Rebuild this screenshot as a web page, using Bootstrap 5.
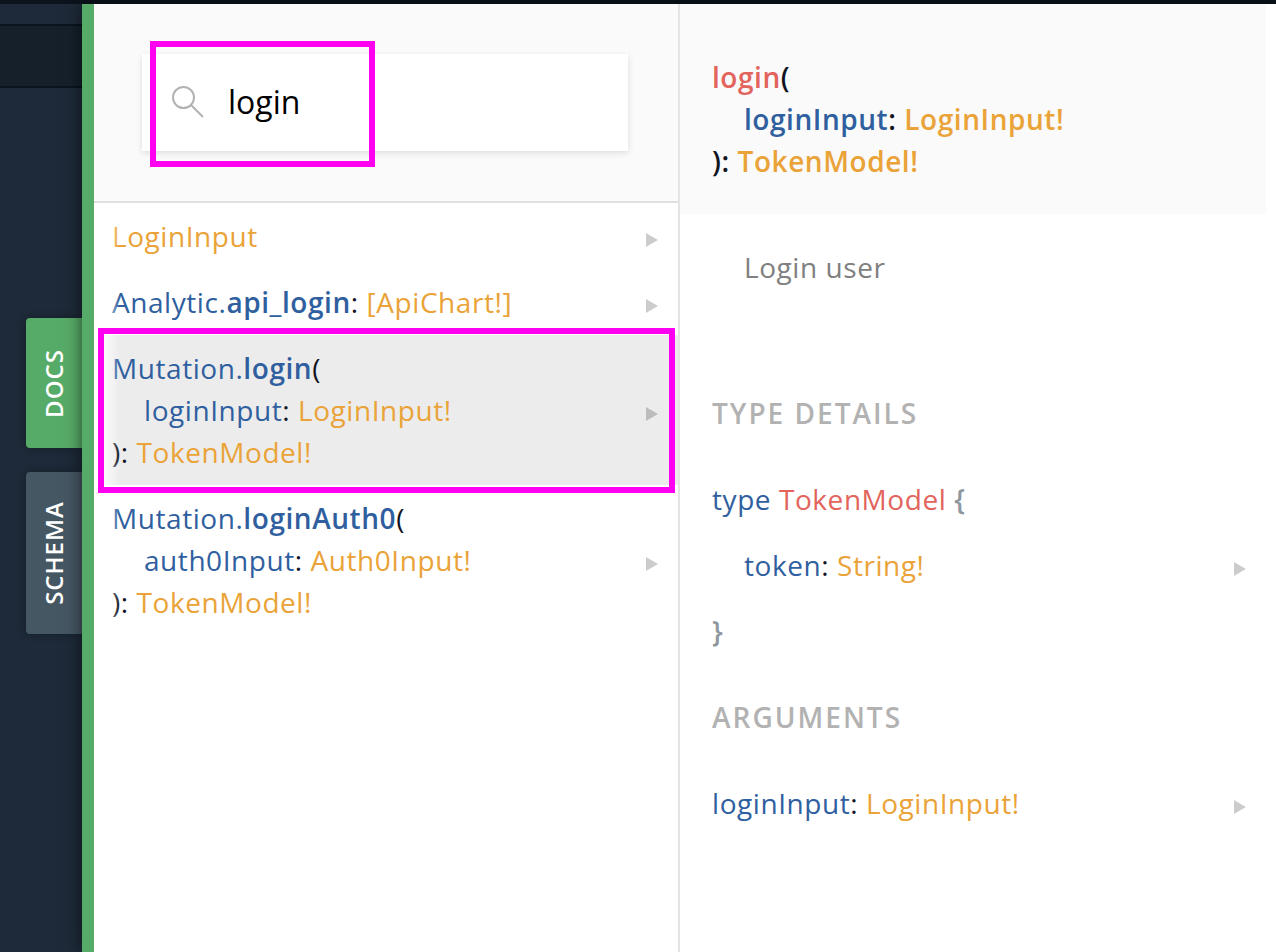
<!DOCTYPE html>
<html lang="en">
<head>
<meta charset="utf-8">
<meta name="viewport" content="width=device-width, initial-scale=1">
<title>API Docs</title>
<link href="https://cdn.jsdelivr.net/npm/bootstrap@5.3.0/dist/css/bootstrap.min.css" rel="stylesheet">
<style>
  body { background: #1e2a39; font-family: "Open Sans", sans-serif; font-size: 28px; line-height: 42px; letter-spacing: .02em; color: #11141f; }
  a { color: inherit; text-decoration: none; }
  .top-strip { height: 4px; background: #0b131c; }
  .editor-rail { width: 82px; }
  .editor-tabs { height: 20px; }
  .editor-bar { height: 64px; background: #15202a; border: solid #0b131c; border-width: 2px 0; }
  .side-tabs { margin-top: 230px; gap: 24px; }
  .side-tab { width: 56px; border: 0; border-radius: 4px 0 0 4px; padding: 0; color: #fff; background: #455763; font-size: 24px; font-weight: 600; line-height: 36px; letter-spacing: 1px; box-shadow: 0 0 8px rgba(0, 0, 0, .3); }
  .side-tab span { writing-mode: vertical-rl; transform: rotate(180deg); }
  .tab-docs { height: 130px; background: #57ab68; }
  .tab-schema { height: 162px; }
  .docs-panel { border-left: 12px solid #57ab68; padding-right: 10px; background: #fff; box-shadow: 0 0 16px rgba(0, 0, 0, .6); min-width: 0; }
  .results { border-right: 2px solid #e4e4e4; }
  .results::before { content: ""; position: absolute; z-index: 1; left: 0; top: 200px; bottom: 0; width: 26px; background: linear-gradient(to right, #fff 20%, rgba(255, 255, 255, 0)); }
  .search-head { padding: 50px 50px 50px 48px; background: #fafafa; border-bottom: 2px solid #e0e0e0; }
  .search-box { height: 97px; padding: 0 30px 2px; gap: 24px; background: #fff; box-shadow: 0 2px 6px rgba(0, 0, 0, .12); }
  .search-box input { min-width: 0; height: 56px; border: 0; padding: 0; outline: 0; background: none; color: #000; font-size: 32px; line-height: 48px; }
  .doc-row { padding: 12px 20px 12px 18px; }
  .doc-row.selected { background: #ececec; }
  .doc-row::after { content: ""; margin-top: 8px; border-left: 12px solid rgba(0, 0, 0, .2); border-top: 7px solid transparent; border-bottom: 7px solid transparent; }
  .doc-row.plain::after { content: none; }
  .details .doc-row { padding-left: 32px; }
  .details .doc-row.nested { padding-left: 64px; }
  .arg { padding-left: 32px; }
  .signature { padding: 52px 32px 32px; background: #fafafa; font-weight: 600; }
  .summary { padding: 32px 64px 104px; color: gray; }
  .section-title { margin: 0; padding: 32px; font-size: 28px; line-height: 42px; font-weight: 600; letter-spacing: 2px; color: #b2b2b2; }
  .summary + .section-title { padding-top: 0; }
  .field-name { color: #305f9f; }
  .field-name b, .brace { font-weight: 600; }
  .type-name { color: #eaa338; }
  .own-name { color: #e2645c; }
  .brace { color: #8e969e; }
  .highlight-frame { position: absolute; z-index: 2; border: 6px solid #ff00f0; pointer-events: none; }
  .frame-search { left: 8px; top: -13px; bottom: -16px; width: 225px; }
  .frame-row { left: 4px; right: 3px; top: -7px; bottom: -8px; }
</style>
</head>
<body>
<div class="d-flex flex-column min-vh-100">
  <div class="top-strip"></div>
  <div class="d-flex flex-grow-1">
    <aside class="editor-rail flex-shrink-0">
      <div class="editor-tabs"></div>
      <div class="editor-bar"></div>
      <nav class="side-tabs d-flex flex-column align-items-end" aria-label="Panels">
        <button type="button" class="side-tab tab-docs d-flex align-items-center justify-content-center"><span>DOCS</span></button>
        <button type="button" class="side-tab tab-schema d-flex align-items-center justify-content-center"><span>SCHEMA</span></button>
      </nav>
    </aside>

    <main class="docs-panel d-flex flex-grow-1 position-relative">
      <section class="w-50 results position-relative">
        <div class="search-head">
          <div class="search-box d-flex align-items-center position-relative">
            <label for="doc-search" class="d-flex">
              <svg width="32" height="32" viewBox="0 0 32 32" fill="none" stroke="#b2b2b2" stroke-width="2" role="img" aria-label="Search the docs"><circle cx="11.5" cy="11.5" r="10.5"/><path d="M19 19 31 31"/></svg>
            </label>
            <input id="doc-search" type="text" class="flex-grow-1" value="login">
            <div class="highlight-frame frame-search"></div>
          </div>
        </div>
        <a href="#" class="doc-row d-flex align-items-center justify-content-between"><span class="type-name">LoginInput</span></a>
        <a href="#" class="doc-row d-flex align-items-center justify-content-between"><span><span class="field-name">Analytic.<b>api_login</b></span>: <span class="type-name">[ApiChart!]</span></span></a>
        <a href="#" class="doc-row selected d-flex align-items-center justify-content-between position-relative">
          <div>
            <div><span class="field-name">Mutation.<b>login</b></span>(</div>
            <div class="arg"><span class="field-name">loginInput</span>: <span class="type-name">LoginInput!</span></div>
            <div>): <span class="type-name">TokenModel!</span></div>
          </div>
          <div class="highlight-frame frame-row"></div>
        </a>
        <a href="#" class="doc-row d-flex align-items-center justify-content-between">
          <div>
            <div><span class="field-name">Mutation.<b>loginAuth0</b></span>(</div>
            <div class="arg"><span class="field-name">auth0Input</span>: <span class="type-name">Auth0Input!</span></div>
            <div>): <span class="type-name">TokenModel!</span></div>
          </div>
        </a>
      </section>

      <section class="w-50 details">
        <div class="signature">
          <div><span class="own-name">login</span>(</div>
          <div class="arg"><span class="field-name">loginInput</span>: <span class="type-name">LoginInput!</span></div>
          <div>): <span class="type-name">TokenModel!</span></div>
        </div>
        <div class="summary">Login user</div>
        <h2 class="section-title">TYPE DETAILS</h2>
        <div class="doc-row plain"><span class="field-name">type</span> <span class="own-name">TokenModel</span> <span class="brace">{</span></div>
        <a href="#" class="doc-row nested d-flex align-items-center justify-content-between"><span><span class="field-name">token</span>: <span class="type-name">String!</span></span></a>
        <div class="doc-row plain"><span class="brace">}</span></div>
        <h2 class="section-title">ARGUMENTS</h2>
        <a href="#" class="doc-row d-flex align-items-center justify-content-between"><span><span class="field-name">loginInput</span>: <span class="type-name">LoginInput!</span></span></a>
      </section>
    </main>
  </div>
</div>
<script src="https://cdn.jsdelivr.net/npm/bootstrap@5.3.0/dist/js/bootstrap.bundle.min.js"></script>
</body>
</html>
